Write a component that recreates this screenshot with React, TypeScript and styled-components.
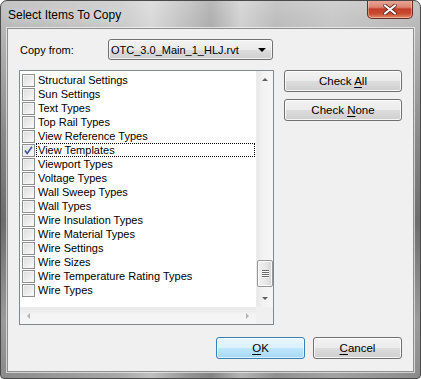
import React from "react";
import styled, { createGlobalStyle, css } from "styled-components";

const Global = createGlobalStyle`
  html, body { margin: 0; padding: 0; overflow: hidden; background: #fff; }
  * { box-sizing: border-box; }
`;

const UI_FONT = `"Liberation Sans", Arial, sans-serif`;

const Frame = styled.div`
  width: 421px;
  height: 379px;
  display: flex;
  flex-direction: column;
  border: 1px solid #4a4a4a;
  border-radius: 7px 7px 4px 4px;
  background:
    linear-gradient(90deg,
      rgba(255,255,255,0) 0px,
      rgba(255,255,255,0.25) 120px,
      rgba(255,255,255,0.45) 150px,
      rgba(255,255,255,0.1) 185px,
      rgba(0,0,0,0.06) 210px,
      rgba(255,255,255,0.35) 240px,
      rgba(255,255,255,0.05) 275px,
      rgba(255,255,255,0.2) 330px,
      rgba(255,255,255,0) 421px),
    linear-gradient(180deg, #c4c4c4 0px, #b6b6b6 30px, #868686 140px, #6c6c6c 220px, #9a9a9a 320px, #8a8a8a 379px);
  font-family: ${UI_FONT};
  overflow: hidden;
`;

const TitleBar = styled.div`
  height: 28px;
  display: flex;
  align-items: flex-start;
  justify-content: space-between;
  padding: 0 7px 0 7px;
`;

const Title = styled.div`
  margin-top: 7px;
  font-size: 12px;
  color: #000;
  text-shadow: 0 0 8px rgba(255,255,255,0.9);
`;

const CloseButton = styled.div`
  width: 46px;
  height: 19px;
  margin-top: -1px;
  border: 1px solid #6b2a22;
  border-top: none;
  border-radius: 0 0 5px 5px;
  background: linear-gradient(180deg, #e9a99b 0%, #dc8470 40%, #c33e28 50%, #c84a30 75%, #e08a64 100%);
  box-shadow: inset 0 0 0 1px rgba(255,255,255,0.35);
  display: flex;
  align-items: center;
  justify-content: center;
`;

const Client = styled.div`
  flex: 1;
  margin: 0 6px 6px 6px;
  border: 1px solid #8e8e8e;
  box-shadow: 0 0 0 1px rgba(255,255,255,0.6);
  background: #f0f0f0;
  padding: 10px 11px 12px 11px;
  display: flex;
  flex-direction: column;
  font-size: 11px;
  color: #000;
`;

const TopRow = styled.div`
  display: flex;
  align-items: center;
  height: 21px;
`;

const Label = styled.div`
  width: 89px;
  padding-left: 1px;
`;

const Combo = styled.div`
  width: 165px;
  height: 21px;
  border: 1px solid #707070;
  border-radius: 3px;
  background: linear-gradient(180deg, #f2f2f2 0%, #ebebeb 50%, #dddddd 51%, #cfcfcf 100%);
  box-shadow: inset 0 0 0 1px rgba(255,255,255,0.7);
  display: flex;
  align-items: center;
  justify-content: space-between;
  padding: 0 6px 0 2px;
`;

const Arrow = styled.span<{ $dir: "down" | "up" | "left" | "right"; $size?: number; $color?: string }>`
  width: 0;
  height: 0;
  ${({ $dir, $size = 4, $color = "#000" }) => {
    const t = `${$size}px solid transparent`;
    const c = `${$size}px solid ${$color}`;
    switch ($dir) {
      case "down":
        return css`border-left: ${t}; border-right: ${t}; border-top: ${c};`;
      case "up":
        return css`border-left: ${t}; border-right: ${t}; border-bottom: ${c};`;
      case "left":
        return css`border-top: ${t}; border-bottom: ${t}; border-right: ${c};`;
      default:
        return css`border-top: ${t}; border-bottom: ${t}; border-left: ${c};`;
    }
  }}
`;

const Middle = styled.div`
  display: flex;
  margin-top: 10px;
  gap: 10px;
`;

const ListBox = styled.div`
  width: 256px;
  height: 255px;
  border: 1px solid #828790;
  background: #fff;
  display: grid;
  grid-template-columns: 1fr 17px;
  grid-template-rows: 1fr 17px;
`;

const Items = styled.div`
  padding: 2px 1px 0 0;
  overflow: hidden;
`;

const Row = styled.div`
  height: 14px;
  display: flex;
  align-items: center;
  padding-left: 2px;
`;

const Check = styled.span`
  width: 13px;
  height: 13px;
  border: 1px solid #8e8f8f;
  background: linear-gradient(135deg, #dcdcdc 0%, #eeeeee 60%, #ffffff 100%);
  box-shadow: inset 0 0 0 1px #f4f4f4;
  display: flex;
  align-items: center;
  justify-content: center;
  flex: none;
`;

const ItemText = styled.span<{ $focus?: boolean }>`
  margin-left: 1px;
  flex: 1;
  height: 14px;
  line-height: 13px;
  padding-left: 1px;
  white-space: nowrap;
  border: 1px dotted ${({ $focus }) => ($focus ? "#000" : "transparent")};
`;

const VScroll = styled.div`
  background: linear-gradient(90deg, #e8e8e8 0%, #f3f3f3 40%, #f6f6f6 100%);
  border-left: 1px solid #ececec;
  display: flex;
  flex-direction: column;
  align-items: center;
`;

const ArrowCell = styled.div`
  width: 17px;
  height: 17px;
  display: flex;
  align-items: center;
  justify-content: center;
  flex: none;
`;

const Track = styled.div`
  flex: 1;
  width: 100%;
  display: flex;
  flex-direction: column;
  justify-content: flex-end;
  align-items: center;
  padding-bottom: 3px;
`;

const Thumb = styled.div`
  width: 16px;
  height: 27px;
  border: 1px solid #979797;
  border-radius: 2px;
  background: linear-gradient(90deg, #f2f2f2 0%, #e8e8e8 50%, #d6d6d6 100%);
  box-shadow: inset 0 0 0 1px rgba(255,255,255,0.8);
  display: flex;
  flex-direction: column;
  align-items: center;
  justify-content: center;
  gap: 1px;
`;

const Grip = styled.span`
  width: 7px;
  height: 1px;
  background: #6a6a6a;
  box-shadow: 0 1px 0 #fff;
`;

const HScroll = styled.div`
  background: linear-gradient(180deg, #e8e8e8 0%, #f3f3f3 40%, #f6f6f6 100%);
  border-top: 1px solid #ececec;
  display: flex;
  align-items: center;
  justify-content: space-between;
`;

const Corner = styled.div`
  background: #f0f0f0;
`;

const ButtonCol = styled.div`
  display: flex;
  flex-direction: column;
  gap: 7px;
`;

const Button = styled.div<{ $w: number; $default?: boolean }>`
  width: ${({ $w }) => $w}px;
  height: 22px;
  border: 1px solid ${({ $default }) => ($default ? "#3c7fb1" : "#707070")};
  border-radius: 3px;
  background: ${({ $default }) =>
    $default
      ? "linear-gradient(180deg, #eaf6fd 0%, #d9f0fc 50%, #bee6fd 51%, #a7d9f5 100%)"
      : "linear-gradient(180deg, #f2f2f2 0%, #ebebeb 50%, #dddddd 51%, #cfcfcf 100%)"};
  box-shadow: inset 0 0 0 1px ${({ $default }) => ($default ? "rgba(255,255,255,0.6)" : "rgba(255,255,255,0.8)")};
  display: flex;
  align-items: center;
  justify-content: center;
  font-size: 11.5px;
  color: #000;
  u { text-decoration: underline; text-underline-offset: 2px; }
`;

const BottomRow = styled.div`
  display: flex;
  justify-content: flex-end;
  gap: 8px;
  margin-top: 12px;
`;

const items = [
  "Structural Settings",
  "Sun Settings",
  "Text Types",
  "Top Rail Types",
  "View Reference Types",
  "View Templates",
  "Viewport Types",
  "Voltage Types",
  "Wall Sweep Types",
  "Wall Types",
  "Wire Insulation Types",
  "Wire Material Types",
  "Wire Settings",
  "Wire Sizes",
  "Wire Temperature Rating Types",
  "Wire Types",
];

const CheckMark = () => (
  <svg width="9" height="9" viewBox="0 0 9 9">
    <path d="M1 4.5 L3.2 7.5 L8 0.8" fill="none" stroke="#3f549a" strokeWidth="1.6" />
  </svg>
);

const CloseX = () => (
  <svg width="14" height="11" viewBox="0 0 14 11">
    <path d="M2 1.5 L12 9.5 M12 1.5 L2 9.5" stroke="#5a2a22" strokeWidth="3.6" strokeLinecap="round" />
    <path d="M2 1.5 L12 9.5 M12 1.5 L2 9.5" stroke="#ffffff" strokeWidth="2.2" strokeLinecap="round" />
  </svg>
);

export default function App() {
  return (
    <>
      <Global />
      <Frame>
        <TitleBar>
          <Title>Select Items To Copy</Title>
          <CloseButton>
            <CloseX />
          </CloseButton>
        </TitleBar>
        <Client>
          <TopRow>
            <Label>Copy from:</Label>
            <Combo>
              <span>OTC_3.0_Main_1_HLJ.rvt</span>
              <Arrow $dir="down" $size={4} />
            </Combo>
          </TopRow>
          <Middle>
            <ListBox>
              <Items>
                {items.map((name) => (
                  <Row key={name}>
                    <Check>{name === "View Templates" && <CheckMark />}</Check>
                    <ItemText $focus={name === "View Templates"}>{name}</ItemText>
                  </Row>
                ))}
              </Items>
              <VScroll>
                <ArrowCell>
                  <Arrow $dir="up" $size={3} $color="#5f5f5f" />
                </ArrowCell>
                <Track>
                  <Thumb>
                    <Grip />
                    <Grip />
                    <Grip />
                    <Grip />
                  </Thumb>
                </Track>
                <ArrowCell>
                  <Arrow $dir="down" $size={3} $color="#5f5f5f" />
                </ArrowCell>
              </VScroll>
              <HScroll>
                <ArrowCell>
                  <Arrow $dir="left" $size={3} $color="#b4b4b4" />
                </ArrowCell>
                <ArrowCell>
                  <Arrow $dir="right" $size={3} $color="#b4b4b4" />
                </ArrowCell>
              </HScroll>
              <Corner />
            </ListBox>
            <ButtonCol>
              <Button $w={118}>
                <span>
                  Check <u>A</u>ll
                </span>
              </Button>
              <Button $w={118}>
                <span>
                  Check <u>N</u>one
                </span>
              </Button>
            </ButtonCol>
          </Middle>
          <BottomRow>
            <Button $w={89} $default>
              <span>
                <u>O</u>K
              </span>
            </Button>
            <Button $w={89}>
              <span>
                <u>C</u>ancel
              </span>
            </Button>
          </BottomRow>
        </Client>
      </Frame>
    </>
  );
}
